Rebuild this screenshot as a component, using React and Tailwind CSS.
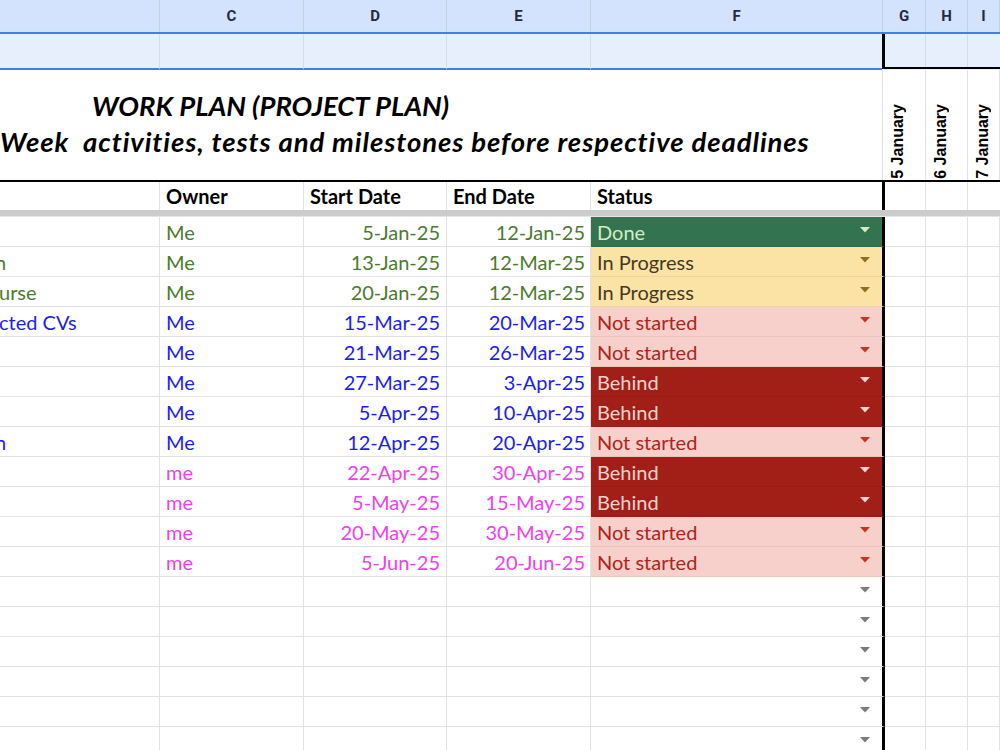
import React from 'react'

const rows = [
  { b: '', bOff: '', owner: 'Me', start: '5-Jan-25', end: '12-Jan-25', status: 'Done', tone: 'green' },
  { b: 'n', bOff: '-ml-[5px]', owner: 'Me', start: '13-Jan-25', end: '12-Mar-25', status: 'In Progress', tone: 'green' },
  { b: 'urse', bOff: '-ml-[1px]', owner: 'Me', start: '20-Jan-25', end: '12-Mar-25', status: 'In Progress', tone: 'green' },
  { b: 'cted CVs', bOff: '-ml-[1px]', owner: 'Me', start: '15-Mar-25', end: '20-Mar-25', status: 'Not started', tone: 'blue' },
  { b: '', bOff: '', owner: 'Me', start: '21-Mar-25', end: '26-Mar-25', status: 'Not started', tone: 'blue' },
  { b: '', bOff: '', owner: 'Me', start: '27-Mar-25', end: '3-Apr-25', status: 'Behind', tone: 'blue' },
  { b: '', bOff: '', owner: 'Me', start: '5-Apr-25', end: '10-Apr-25', status: 'Behind', tone: 'blue' },
  { b: 'n', bOff: '-ml-[5px]', owner: 'Me', start: '12-Apr-25', end: '20-Apr-25', status: 'Not started', tone: 'blue' },
  { b: '', bOff: '', owner: 'me', start: '22-Apr-25', end: '30-Apr-25', status: 'Behind', tone: 'pink' },
  { b: '', bOff: '', owner: 'me', start: '5-May-25', end: '15-May-25', status: 'Behind', tone: 'pink' },
  { b: '', bOff: '', owner: 'me', start: '20-May-25', end: '30-May-25', status: 'Not started', tone: 'pink' },
  { b: '', bOff: '', owner: 'me', start: '5-Jun-25', end: '20-Jun-25', status: 'Not started', tone: 'pink' },
]

const toneText = {
  green: 'text-[#4b7b2b]',
  blue: 'text-[#1c1cf2]',
  pink: 'text-[#ee40ee]',
}

const statusStyle = {
  'Done': { cell: 'bg-[#34734f] text-[#d3ecc3]', arrow: '#d3ecc3' },
  'In Progress': { cell: 'bg-[#fbe3a6] text-[#473822]', arrow: '#8f6d22' },
  'Not started': { cell: 'bg-[#f7d0cb] text-[#b0241b]', arrow: '#c8331f' },
  'Behind': { cell: 'bg-[#a11f17] text-[#f5d2cd]', arrow: '#f5d2cd' },
  '': { cell: 'bg-white', arrow: '#7b7b7b' },
}

function Arrow({ color }) {
  return (
    <svg width="10" height="6" viewBox="0 0 10 6" className="shrink-0">
      <path d="M0 0h10L5 5.5z" fill={color} />
    </svg>
  )
}

function DataRow({ r }) {
  const tone = r ? toneText[r.tone] : ''
  const st = statusStyle[r ? r.status : '']
  return (
    <div className="flex h-[30px] text-[20px] leading-none">
      <div className="w-[160px] h-full border-r border-b border-[#e2e2e2] flex items-center overflow-hidden">
        {r && r.b && <span className={`whitespace-nowrap ${r.bOff} ${tone}`}>{r.b}</span>}
      </div>
      <div className={`w-[144px] h-full border-r border-b border-[#e2e2e2] flex items-center pl-[6px] ${tone}`}>
        {r && r.owner}
      </div>
      <div className={`w-[143px] h-full border-r border-b border-[#e2e2e2] flex items-center justify-end pr-[6px] ${tone}`}>
        {r && r.start}
      </div>
      <div className={`w-[144px] h-full border-r border-b border-[#e2e2e2] flex items-center justify-end pr-[5px] ${tone}`}>
        {r && r.end}
      </div>
      <div className={`w-[294px] h-full border-r-[3px] border-r-black border-b ${r ? 'border-b-black/5' : 'border-b-[#e2e2e2]'} flex items-center justify-between pl-[6px] pr-[12px] ${st.cell}`}>
        <span>{r && r.status}</span>
        <span className="-mt-[3px]"><Arrow color={st.arrow} /></span>
      </div>
      <div className="w-[41px] h-full border-r border-b border-[#e2e2e2]" />
      <div className="w-[42px] h-full border-r border-b border-[#e2e2e2]" />
      <div className="flex-1 h-full border-r border-b border-[#e2e2e2]" />
    </div>
  )
}

const letters = [
  { l: '', w: 'w-[160px]' },
  { l: 'C', w: 'w-[144px]' },
  { l: 'D', w: 'w-[143px]' },
  { l: 'E', w: 'w-[144px]' },
  { l: 'F', w: 'w-[292px]' },
  { l: 'G', w: 'w-[43px]' },
  { l: 'H', w: 'w-[42px]' },
  { l: 'I', w: 'flex-1' },
]

export default function App() {
  return (
    <div className="w-[1000px] h-[750px] overflow-hidden bg-white font-[Lato,'Open_Sans',sans-serif]">
      {/* column letters */}
      <div className="flex h-[34px] bg-[#d3e3fd] border-b-2 border-[#3f7fe8] font-[Roboto,sans-serif] font-bold text-[15px] text-[#1f2a44]">
        {letters.map((c, i) => (
          <div key={i} className={`${c.w} h-full border-r border-[#c4cfe0] flex items-center justify-center`}>
            {c.l}
          </div>
        ))}
      </div>

      {/* selected row */}
      <div className="flex h-[36px] bg-[#e8effc]">
        <div className="w-[160px] border-r border-[#d6dbe4] border-b-2 border-b-[#3f7fe8]" />
        <div className="w-[144px] border-r border-[#d6dbe4] border-b-2 border-b-[#3f7fe8]" />
        <div className="w-[143px] border-r border-[#d6dbe4] border-b-2 border-b-[#3f7fe8]" />
        <div className="w-[144px] border-r border-[#d6dbe4] border-b-2 border-b-[#3f7fe8]" />
        <div className="w-[291px] border-b-2 border-b-[#3f7fe8]" />
        <div className="flex-1 flex border-l-[3px] border-black border-b-2 mb-[1px]">
          <div className="w-[41px] border-r border-[#d6dbe4]" />
          <div className="w-[42px] border-r border-[#d6dbe4]" />
          <div className="flex-1" />
        </div>
      </div>

      {/* title block */}
      <div className="flex h-[110px]">
        <div className="w-[883px] border-r border-[#e2e2e2] flex flex-col justify-center font-bold italic text-[27.5px] leading-[36px] text-black pb-[2px]">
          <div className="pl-[92px] whitespace-nowrap">WORK PLAN (PROJECT PLAN)</div>
          <div className="whitespace-nowrap tracking-[0.9px]">Week&nbsp; activities, tests and milestones before respective deadlines</div>
        </div>
        {['5 January', '6 January', '7 January'].map((d, i) => (
          <div key={d} className={`${i === 0 ? 'w-[43px]' : i === 1 ? 'w-[42px]' : 'flex-1'} border-r border-[#e2e2e2] flex items-end pl-[7px] pb-[1px]`}>
            <span className="[writing-mode:vertical-rl] rotate-180 font-['Liberation_Sans',sans-serif] font-bold text-[16px] leading-none text-black whitespace-nowrap">
              {d}
            </span>
          </div>
        ))}
      </div>

      {/* header row */}
      <div className="flex h-[30px] border-t-2 border-black font-bold text-[20px] leading-none text-black">
        <div className="w-[160px] border-r border-[#e2e2e2]" />
        <div className="w-[144px] border-r border-[#e2e2e2] flex items-center pl-[6px]">Owner</div>
        <div className="w-[143px] border-r border-[#e2e2e2] flex items-center pl-[6px]">Start Date</div>
        <div className="w-[144px] border-r border-[#e2e2e2] flex items-center pl-[6px]">End Date</div>
        <div className="w-[294px] border-r-[3px] border-black flex items-center pl-[6px]">Status</div>
        <div className="w-[41px] border-r border-[#e2e2e2]" />
        <div className="w-[42px] border-r border-[#e2e2e2]" />
        <div className="flex-1" />
      </div>

      {/* frozen divider */}
      <div className="h-[7px] bg-[#cbcbcb] border-b border-[#e6e6e6]" />

      {rows.map((r, i) => (
        <DataRow key={i} r={r} />
      ))}
      {[0, 1, 2, 3, 4, 5].map(i => (
        <DataRow key={'e' + i} r={null} />
      ))}
    </div>
  )
}
